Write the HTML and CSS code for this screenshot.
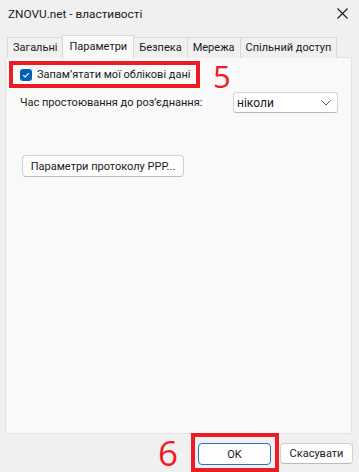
FILE: index.html
```html
<!DOCTYPE html>
<html>
	<head>
		<meta charset="UTF-8">
		<title>ZNOVU.net - властивості</title>
		<link rel="stylesheet" href="styles.css">
	</head>
	<body>
		<div class="window">
			<!--заголовок-->
			<div class="titlebar">
				<span class="title">ZNOVU.net - властивості</span>
				<svg class="close" width="11" height="11" viewBox="0 0 11 11">
					<path d="M0.5 0.5 L10.5 10.5 M10.5 0.5 L0.5 10.5" stroke="#1a1a1a" stroke-width="1.1" fill="none"/>
				</svg>
			</div>
			<!--вкладки-->
			<div class="tabs">
				<div class="tab">Загальні</div>
				<div class="tab active">Параметри</div>
				<div class="tab">Безпека</div>
				<div class="tab">Мережа</div>
				<div class="tab">Спільний доступ</div>
			</div>
			<!--панель-->
			<div class="panel">
				<div class="row-check">
					<div class="mark-box check-box">
						<span class="checkbox">
							<svg width="12" height="12" viewBox="0 0 12 12">
								<path d="M3.2 6.2 L5.1 8 L8.9 4.2" stroke="#fff" stroke-width="1.1" fill="none"/>
							</svg>
						</span>
						<span>Запамʼятати мої облікові дані</span>
					</div>
					<span class="mark-num">5</span>
				</div>
				<div class="row-idle">
					<span>Час простоювання до розʼєднання:</span>
					<div class="select">
						<span>ніколи</span>
						<svg width="10" height="6" viewBox="0 0 10 6">
							<path d="M0.5 0.5 L5 5 L9.5 0.5" stroke="#555" stroke-width="1" fill="none"/>
						</svg>
					</div>
				</div>
				<div class="btn ppp">Параметри протоколу PPP...</div>
			</div>
			<!--кнопки-->
			<div class="footer">
				<span class="mark-num big">6</span>
				<div class="mark-box ok-box">
					<div class="btn ok">OK</div>
				</div>
				<div class="btn cancel">Скасувати</div>
			</div>
		</div>
	</body>
</html>
```
FILE: styles.css
```css
* {
	margin: 0;
	padding: 0;
	box-sizing: border-box;
}
body {
	background: #f0f0f0;
	font-family: Roboto, "Liberation Sans", sans-serif;
	font-size: 11px;
	color: #1a1a1a;
	white-space: nowrap;
}
.window {
	width: 359px;
	height: 472px;
	overflow: hidden;
}
.titlebar {
	height: 35px;
	display: flex;
	justify-content: space-between;
	padding: 7px 11px 0 8px;
	font-size: 11.8px;
}
.close {
	margin-top: 1px;
}
.tabs {
	display: flex;
	align-items: flex-end;
	height: 23px;
	margin-left: 7px;
	margin-bottom: -1px;
	position: relative;
}
.tab {
	height: 21px;
	padding: 1px 5px 0;
	border: 1px solid #dadada;
	border-bottom: none;
	margin-right: -1px;
	background: #f0f0f0;
	line-height: 18px;
}
.tab.active {
	height: 24px;
	background: #f9f9f9;
	padding: 2px 6px 0;
	margin-bottom: -1px;
	position: relative;
	z-index: 2;
}
.panel {
	height: 377px;
	margin: 0 7px 0 5px;
	background: #f9f9f9;
	border: 1px solid #e3e3e3;
	padding: 3px 0 0 3px;
}
.row-check {
	display: flex;
	align-items: flex-start;
}
.mark-box {
	border: 4px solid #ec1c24;
}
.check-box {
	width: 191px;
	height: 27px;
	display: flex;
	align-items: center;
	padding-left: 7px;
	gap: 5px;
}
.checkbox {
	width: 12px;
	height: 12px;
	border-radius: 3px;
	background: #005fb8;
	display: flex;
}
.mark-num {
	color: #ec1c24;
	font-family: "Open Sans", sans-serif;
	font-size: 31px;
	line-height: 30px;
	margin-left: 13px;
}
.row-idle {
	display: flex;
	justify-content: space-between;
	align-items: center;
	margin: 1px 13px 0 11px;
}
.select {
	width: 105px;
	height: 21px;
	background: #fff;
	border: 1px solid #d3d3d3;
	border-bottom-color: #b8b8b8;
	border-radius: 3px;
	display: flex;
	justify-content: space-between;
	align-items: center;
	padding: 0 6px 0 3px;
	font-size: 12px;
}
.btn {
	height: 22px;
	background: #fdfdfd;
	border: 1px solid #d0d0d0;
	border-bottom-color: #bcbcbc;
	border-radius: 4px;
	display: flex;
	align-items: center;
	justify-content: center;
}
.ppp {
	width: 162px;
	margin: 42px 0 0 13px;
}
.footer {
	display: flex;
	justify-content: flex-end;
	align-items: flex-start;
	margin-top: -1px;
	padding-right: 6px;
	position: relative;
}
.mark-num.big {
	font-size: 35px;
	line-height: 37px;
	margin: 1px 13px 0 0;
}
.ok-box {
	width: 88px;
	height: 39px;
	padding: 6px 4px 3px 3px;
}
.ok {
	border: 1px solid #2b6fc0;
}
.cancel {
	width: 73px;
	height: 21px;
	margin: 10px 0 0 1px;
}
```
